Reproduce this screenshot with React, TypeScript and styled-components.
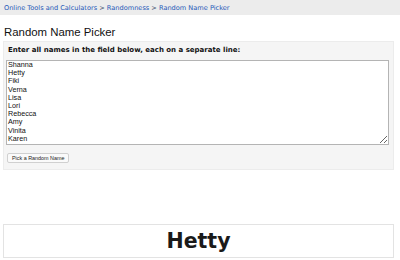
import React from "react";
import styled, { createGlobalStyle } from "styled-components";

const Global = createGlobalStyle`
  html, body { margin: 0; padding: 0; background: #fff; }
  body { font-family: "DejaVu Sans", Verdana, sans-serif; color: #222; }
`;

const Page = styled.div`
  width: 400px;
  display: flex;
  flex-direction: column;
`;

const Crumbs = styled.nav`
  height: 15px;
  background: #ececec;
  display: flex;
  align-items: center;
  padding-left: 4px;
  font-size: 6.6px;
  color: #3a4a6a;
  white-space: pre;
`;

const Crumb = styled.a`
  color: #2558b8;
  text-decoration: none;
`;

const Title = styled.h1`
  margin: 9px 0 0 4px;
  font-family: "Liberation Sans", Arial, sans-serif;
  font-weight: normal;
  font-size: 11.4px;
  line-height: 17px;
  color: #111;
`;

const Panel = styled.section`
  margin: 0 6px 0 3px;
  background: #f5f5f5;
  border: 1px solid #ececec;
  padding: 2px 4px 6px 2px;
  display: flex;
  flex-direction: column;
  align-items: flex-start;
`;

const Label = styled.label`
  font-size: 7px;
  font-weight: bold;
  color: #111;
  line-height: 13px;
  padding-left: 2px;
`;

const Area = styled.textarea`
  box-sizing: border-box;
  width: 383px;
  height: 85px;
  margin-top: 3px;
  border: 1px solid #b4b4b4;
  background: #fff;
  font-family: "Liberation Sans", Arial, sans-serif;
  font-size: 7.2px;
  line-height: 8.2px;
  color: #111;
  padding: 0 1px;
  resize: vertical;
  overflow: hidden;
`;

const Button = styled.button`
  margin: 8px 0 0 1px;
  height: 10px;
  padding: 0 4px;
  font-family: "Liberation Sans", Arial, sans-serif;
  font-size: 5.4px;
  line-height: 8px;
  color: #222;
  background: #fafafa;
  border: 1px solid #d0d0d0;
  border-radius: 2px;
`;

const Result = styled.div`
  margin: 54px 6px 0 3px;
  height: 34px;
  box-sizing: border-box;
  border: 1px solid #e3e3e3;
  display: flex;
  align-items: center;
  justify-content: center;
  font-family: "DejaVu Sans", Verdana, sans-serif;
  font-weight: bold;
  font-size: 20.5px;
  color: #1a1a1a;
`;

const names = ["Shanna", "Hetty", "Fiki", "Verna", "Lisa", "Lori", "Rebecca", "Amy", "Vinita", "Karen"].join("\n");

export default function App() {
  return (
    <Page>
      <Global />
      <Crumbs>
        <Crumb href="#">Online Tools and Calculators</Crumb>{" > "}
        <Crumb href="#">Randomness</Crumb>{" > "}
        <Crumb href="#">Random Name Picker</Crumb>
      </Crumbs>
      <Title>Random Name Picker</Title>
      <Panel>
        <Label>Enter all names in the field below, each on a separate line:</Label>
        <Area defaultValue={names} />
        <Button>Pick a Random Name</Button>
      </Panel>
      <Result>Hetty</Result>
    </Page>
  );
}
